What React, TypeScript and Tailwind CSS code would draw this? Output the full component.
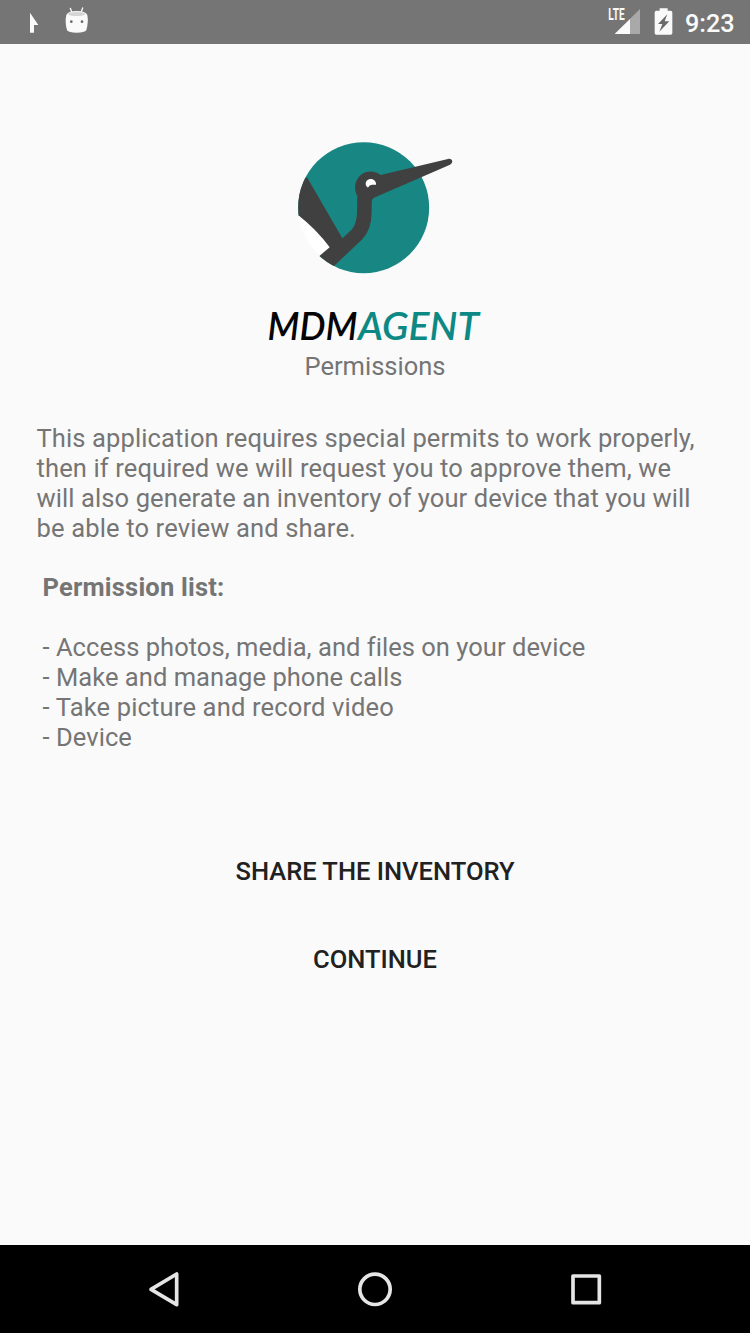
import React from "react";

const intro = [
  { text: "This application requires special permits to work properly,", tracking: "tracking-[0.120px]" },
  { text: "then if required we will request you to approve them, we", tracking: "tracking-[0.125px]" },
  { text: "will also generate an inventory of your device that you will", tracking: "tracking-[0.092px]" },
  { text: "be able to review and share.", tracking: "tracking-[0.150px]" },
];

const permissions = [
  { text: "- Access photos, media, and files on your device", tracking: "tracking-[0.030px]" },
  { text: "- Make and manage phone calls", tracking: "tracking-[0.040px]" },
  { text: "- Take picture and record video", tracking: "tracking-[0.160px]" },
  { text: "- Device", tracking: "tracking-[0.060px]" },
];

function StatusBar() {
  return (
    <header className="flex h-[43.5px] shrink-0 items-start bg-[#757575] text-[#fafafa]">
      <svg className="h-[44px] w-[120px]" viewBox="0 0 360 132" fill="#fafafa">
        <path d="M90 38 L115 75 H102 V98 H90 Z" />
        <path d="M211 25 L216 38 M248 24 L243 38" stroke="#fafafa" strokeWidth="4" strokeLinecap="round" />
        <path d="M199 45 Q204 33 230 33 Q257 33 262 45 Q266 66 259 91 Q254 98 230 98 Q206 98 201 91 Q194 66 199 45 Z" />
        <ellipse cx="230" cy="42" rx="26" ry="6" fill="#d5d5d5" />
        <circle cx="214" cy="65" r="4" fill="#686868" />
        <circle cx="246" cy="65" r="4" fill="#686868" />
      </svg>
      <svg className="ml-auto h-[44px] w-[160px]" viewBox="0 0 480 132" fill="#fafafa">
        <path d="M150 27 V102 H74 Z" fill="#a9a9a9" />
        <path d="M104 27 H115 V62 L104 72 Z" fill="#757575" />
        <path d="M120 57 V102 H74 Z" />
        <text x="55" y="61" fontFamily="Roboto, sans-serif" fontWeight="700" fontSize="47" textLength="49" lengthAdjust="spacingAndGlyphs">LTE</text>
        <path d="M209 25 H233 V32 H242 Q247 32 247 38 V99 Q247 104 242 104 H199 Q194 104 194 99 V38 Q194 32 199 32 H209 Z" />
        <path d="M232 43 L204 72 H217 L208 95 L238 64 H224 Z" fill="#6b6b6b" />
        <text x="285" y="96" fontFamily="Roboto, sans-serif" fontWeight="500" fontSize="77" textLength="149" lengthAdjust="spacingAndGlyphs">9:23</text>
      </svg>
    </header>
  );
}

function Logo() {
  return (
    <svg className="h-[155px] w-[190px] shrink-0" viewBox="0 0 570 465">
      <defs>
        <clipPath id="disc">
          <circle cx="251" cy="233" r="196.5" />
        </clipPath>
      </defs>
      <g clipPath="url(#disc)">
        <rect x="50" y="30" width="402" height="406" fill="#188783" />
        <path d="M81 142 L187 325 L214 300 Q230 282 231 248 L232 204 L275 208 V248 Q274 298 247 328 L164 406 L140 440 L40 400 V160 Z" fill="#404040" />
        <path d="M50 252 Q108 296 149 352 L119 377 L90 400 L40 400 Z" fill="#fff" />
      </g>
      <path d="M56 258 A196.500 196.500 0 0 0 118 377" fill="none" stroke="#fcfcfc" strokeWidth="5" />
      <path d="M232 210 V197 C218 174 227 145 246 132 C264 120 287 123 302 135 L504 87 C517 84 522 98 510 104 L282 203 Q275 206 275 218 L253 232 Z" fill="#404040" />
      <path d="M262 172 C252 163 258 147 272 147 C282 147 289 155 288 164 H276 Q267 165 265 172 Z" fill="#fff" />
    </svg>
  );
}

function Wordmark() {
  return (
    <svg className="h-[50px] w-[240px] shrink-0" viewBox="0 0 240 50" fontFamily="Lato, sans-serif" fontStyle="italic" fontWeight="600" fontSize="38.500">
      <text x="12.500" y="39.700" textLength="90" lengthAdjust="spacingAndGlyphs" fill="#050505">MDM</text>
      <text x="103" y="39.700" textLength="121" lengthAdjust="spacingAndGlyphs" fill="#0c8984">AGENT</text>
    </svg>
  );
}

function NavBar() {
  return (
    <nav className="flex h-[88px] shrink-0 items-center justify-center bg-black">
      <svg className="h-[88px] w-[490px]" viewBox="0 0 1470 264" fill="none" stroke="#e5e5e5" strokeWidth="11" strokeLinejoin="round">
        <path d="M63 133 L140 87 V179 Z" />
        <circle cx="735" cy="133" r="45.500" />
        <rect x="1329" y="93" width="79" height="80" />
      </svg>
    </nav>
  );
}

export default function App() {
  return (
    <div className="flex h-[1333px] w-[750px] flex-col overflow-hidden bg-[#fafafa] font-['Roboto',sans-serif] text-[25.520px] leading-[29.850px] text-[#757575]">
      <StatusBar />
      <main className="flex grow flex-col">
        <div className="flex flex-col items-center pt-[86.500px]">
          <Logo />
          <div className="mt-[15px] flex">
            <Wordmark />
          </div>
          <h1 className="mt-[2px]">Permissions</h1>
        </div>
        <div className="mt-[42.400px] whitespace-nowrap pl-[36.500px]">
          {intro.map(({ text, tracking }) => (
            <p key={text} className={tracking}>{text}</p>
          ))}
        </div>
        <h2 className="mt-[29.850px] pl-[42.500px] font-bold tracking-[0.200px]">Permission list:</h2>
        <ul className="mt-[29.850px] pl-[42.500px]">
          {permissions.map(({ text, tracking }) => (
            <li key={text} className={tracking}>{text}</li>
          ))}
        </ul>
        <div className="mt-[75.600px] flex flex-col items-center font-medium text-[#212121]">
          <button className="h-[87.500px]">SHARE THE INVENTORY</button>
          <button className="h-[88.500px]">CONTINUE</button>
        </div>
      </main>
      <NavBar />
    </div>
  );
}
